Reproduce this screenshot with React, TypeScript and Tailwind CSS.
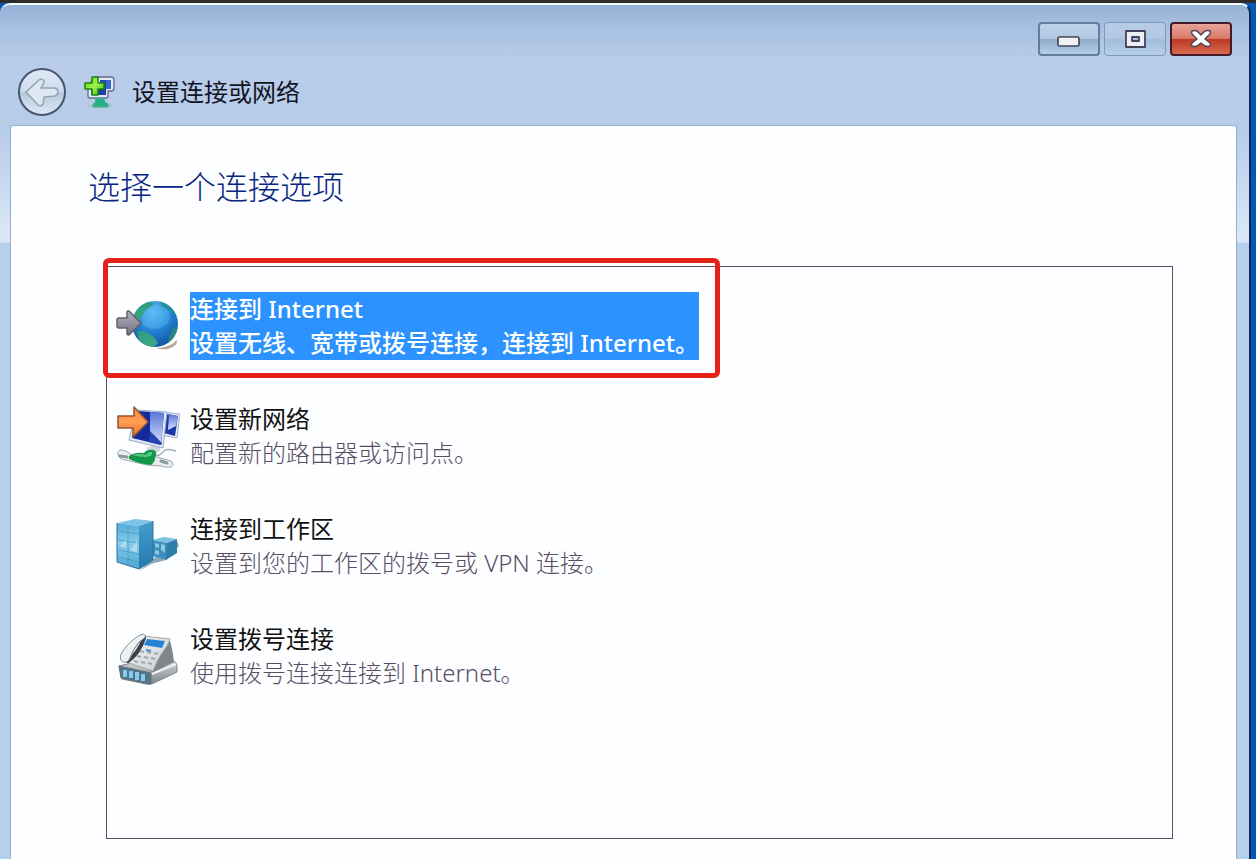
import React, { useState } from "react";

function NetworkAddIcon() {
  return (
    <svg width="34" height="34" viewBox="0 0 34 34" aria-hidden="true">
      <defs>
        <linearGradient id="plus" x1="0" y1="0" x2="1" y2="1">
          <stop offset="0" stopColor="#3fdc16" />
          <stop offset=".5" stopColor="#a5f24a" />
          <stop offset="1" stopColor="#27b80e" />
        </linearGradient>
      </defs>
      <ellipse cx="16" cy="31" rx="13" ry="2" fill="#aebfd2" />
      <path d="M12 2h15q3 0 3 3v8q0 3-3 3h-3v5q0 2-2 2H6q-2 0-2-2V10z" fill="#e3e8f7" stroke="#646c90" strokeWidth="1.3" />
      <path d="M16 5h11v9H16z" fill="#2348b0" />
      <path d="M7 12h15v8H7z" fill="#213e9d" />
      <path d="M22 5h5v9h-5z" fill="#3a68cc" />
      <path d="M11 24q4-2 9 0l1 3 3 2v3H9v-3l3-2z" fill="#27b183" stroke="#4cae94" />
      <path d="M8 2h6v6h6v6h-6v6H8v-6H1V8h7z" fill="url(#plus)" stroke="#188414" strokeWidth="1.5" strokeLinejoin="round" />
    </svg>
  );
}

function GlobeIcon() {
  return (
    <svg width="64" height="64" viewBox="0 0 64 64" aria-hidden="true">
      <defs>
        <radialGradient id="sea" cx=".45" cy=".25" r=".8">
          <stop offset="0" stopColor="#69c8f5" />
          <stop offset=".5" stopColor="#2382d4" />
          <stop offset="1" stopColor="#164f9d" />
        </radialGradient>
        <linearGradient id="greyArrow" x1="0" y1="0" x2="0" y2="1">
          <stop offset="0" stopColor="#b5b0be" />
          <stop offset="1" stopColor="#77727f" />
        </linearGradient>
        <linearGradient id="land" x1="0" y1="0" x2="0" y2="1">
          <stop offset="0" stopColor="#2c9c86" />
          <stop offset="1" stopColor="#41aa7c" />
        </linearGradient>
        <clipPath id="globeClip"><circle cx="39" cy="30" r="23" /></clipPath>
      </defs>
      <path d="M40 54q13 0 21-8 1 6-9 9-7 1-12-1z" fill="#b9a79b" />
      <circle cx="39" cy="30" r="23" fill="url(#sea)" />
      <g clipPath="url(#globeClip)">
        <path d="M15 30Q17 12 33 7l5 3-8 6-5 7-4 9z" fill="url(#land)" />
        <path d="M43 6l12 4 7 13-6-4-5-4-5-3z" fill="#218f8c" opacity=".8" />
        <path d="M21 37l8 0 9 6 4 6-6 6-12-4z" fill="url(#land)" />
        <path d="M57 34l7-2-3 12-10 9 2-10z" fill="#2a9077" opacity=".8" />
        <path d="M29 16q13-10 24 2 3 8-3 13-12 8-22 1-4-7 1-16z" fill="#53b2f5" opacity=".45" />
      </g>
      <path d="M1 26q0-2 2-2h8v-6q1-2 3 0l11 11-11 11q-2 2-3 0v-6H3q-2 0-2-2z" fill="url(#greyArrow)" stroke="#625d69" strokeWidth="1.5" strokeLinejoin="round" />
    </svg>
  );
}

function NewNetworkIcon() {
  return (
    <svg width="64" height="64" viewBox="0 0 64 64" aria-hidden="true">
      <defs>
        <linearGradient id="glare" x1="0" y1="0" x2="0" y2="1">
          <stop offset="0" stopColor="#5877d8" />
          <stop offset="1" stopColor="#d7e2fb" />
        </linearGradient>
        <linearGradient id="orange" x1="0" y1="0" x2="0" y2="1">
          <stop offset="0" stopColor="#f58a3e" />
          <stop offset=".5" stopColor="#ff9e55" />
          <stop offset="1" stopColor="#e36a22" />
        </linearGradient>
      </defs>
      <path d="M30 44l10-4 5 6-8 5z" fill="#cfd6de" />
      <path d="M47 8l17 2-3 24-16-3z" fill="#e3e9f6" stroke="#a5b2cf" />
      <path d="M50 10l12 2-3 20-11-3z" fill="#1c35a8" />
      <path d="M53 10l9 2-2 10-8 4z" fill="url(#glare)" />
      <path d="M20 6l31 2-4 36-34-8z" fill="#e3e9f6" stroke="#9ba8c7" />
      <path d="M22 7l26 2-3 32-29-7z" fill="#142a9c" />
      <path d="M34 8l14 1-3 31-11-12z" fill="url(#glare)" />
      <path d="M34 27l12 12-1 2-12-3z" fill="#2444b4" />
      <path d="M60 47q-10-4-14 2-4 4-8 2" fill="none" stroke="#a6adb6" strokeWidth="1.5" />
      <path d="M4 46q4-1 12 5l21 1 18 5q4 4 0 6-4 1-10-1L31 61 5 55q-6-6-1-9z" fill="#e9edef" stroke="#9aa9aa" />
      <path d="M4 52l7 1M45 57l6 2" stroke="#8b9a9e" strokeWidth="3" strokeLinecap="round" />
      <path d="M13 52q6-4 15-3 3-4 10-3 4 3 1 7 1 4-4 8-12-1-22-6z" fill="#12964a" />
      <path d="M16 51q8-2 14 0 3-4 6-3 1 4-5 5-8 0-15-2z" fill="#57c583" />
      <path d="M2 12h16V3l14 15-15 15v-9H2z" fill="url(#orange)" stroke="#96562f" strokeWidth="1.5" strokeLinejoin="round" />
    </svg>
  );
}

function WorkplaceIcon() {
  return (
    <svg width="64" height="64" viewBox="0 0 64 64" aria-hidden="true">
      <defs>
        <linearGradient id="tower" x1="0" y1="0" x2="0" y2="1">
          <stop offset="0" stopColor="#55aedb" />
          <stop offset=".45" stopColor="#86cbea" />
          <stop offset="1" stopColor="#4ba4d2" />
        </linearGradient>
        <linearGradient id="towerSide" x1="0" y1="0" x2="0" y2="1">
          <stop offset="0" stopColor="#459fcd" />
          <stop offset="1" stopColor="#2478ae" />
        </linearGradient>
      </defs>
      <path d="M36 46l25-19 2 5-13 14-15 4-12 7z" fill="#8ea7b9" />
      <path d="M36 26l12-3 13 2-10 4z" fill="#7cc2e0" />
      <path d="M36 26l15 3v17l-15-4z" fill="#3b8fba" />
      <path d="M51 29l10-4v14l-11 7z" fill="#2f7eaa" />
      <path d="M39 29l4 1v4l-4-1zM45 30l4 1v8l-4-3zM39 36l4 1v4l-4-1z" fill="#8cc6df" />
      <path d="M1 9L19 5l18 2-14 5z" fill="#7dc3e3" />
      <path d="M1 9l22 3v43L1 48z" fill="url(#tower)" />
      <path d="M23 12l14-5v39l-14 9z" fill="url(#towerSide)" />
      <path d="M12 11v40M2 17l21 3M2 26l21 3M2 36l21 4M2 43l21 5" stroke="#3b93c2" strokeWidth="1" opacity=".6" fill="none" />
      <path d="M4 32l6-6v8zM14 36l7-9v12z" fill="#bddeea" opacity=".8" />
      <path d="M1 9v39l22 7 14-9V7" stroke="#2c719c" fill="none" />
    </svg>
  );
}

function PhoneIcon() {
  return (
    <svg width="64" height="64" viewBox="0 0 64 64" aria-hidden="true">
      <defs>
        <linearGradient id="phoneBody" x1="0" y1="0" x2="1" y2="1">
          <stop offset="0" stopColor="#f6f7f8" />
          <stop offset="1" stopColor="#c8cdd0" />
        </linearGradient>
        <linearGradient id="phoneBase" x1="0" y1="0" x2="0" y2="1">
          <stop offset="0" stopColor="#d9dddf" />
          <stop offset="1" stopColor="#7c8488" />
        </linearGradient>
      </defs>
      <path d="M3 42l29-7 24 1q5 2 5 6v6L38 59q-4 2-8 1L6 55z" fill="url(#phoneBase)" stroke="#7b8387" />
      <path d="M54 16q3 12 4 22L36 49l-2-3z" fill="#7f8688" />
      <path d="M27 12l27 3q-2 7-8 14-5 7-9 18L10 38z" fill="url(#phoneBody)" stroke="#a0a6aa" />
      <path d="M31 15l18 2-3 7-18-3z" fill="#2684d7" />
      <path d="M24 27l4 1M31 28l4 1M38 29l4 1M21 32l4 1M28 33l4 1M35 34l4 1M18 37l4 1M25 38l4 1M32 39l4 1" stroke="#a0a8ac" strokeWidth="2" />
      <path d="M30 26l5 1" stroke="#3b91d6" strokeWidth="2" />
      <path d="M28 14Q23 29 12 37" stroke="#37414b" strokeWidth="4" strokeLinecap="round" fill="none" />
      <path d="M24 11q4-2 6 1-2 3-7 6-6 7-9 16-2 5-7 4-4-2-2-8Q12 18 24 11z" fill="#eef1f3" stroke="#858e94" />
      <path d="M3 42l32 7v11L5 54z" fill="#52748b" stroke="#65727a" />
      <path d="M9 46v7M15 47v7M21 48v8M27 50v7" stroke="#85cbed" strokeWidth="4" />
      <path d="M36 50l24-10" stroke="#f0f2f3" strokeWidth="2" />
    </svg>
  );
}

function BackArrow() {
  return (
    <svg width="36" height="32" viewBox="0 0 36 32" aria-hidden="true">
      <path d="M2 16L15 4q3-2 5 1 0 3-3 7h14q3 1 3 4t-3 4l-11 1-1 7q-2 3-5 1z" fill="#dde8f3" stroke="#94a3b2" strokeWidth="1.5" strokeLinejoin="round" />
    </svg>
  );
}

const options = [
  { title: "连接到 Internet", detail: "设置无线、宽带或拨号连接，连接到 Internet。", Icon: GlobeIcon },
  { title: "设置新网络", detail: "配置新的路由器或访问点。", Icon: NewNetworkIcon },
  { title: "连接到工作区", detail: "设置到您的工作区的拨号或 VPN 连接。", Icon: WorkplaceIcon },
  { title: "设置拨号连接", detail: "使用拨号连接连接到 Internet。", Icon: PhoneIcon },
];

const captionButton = "flex h-[34px] w-[62px] items-center justify-center rounded-[4px]";

export default function App() {
  const [selected, setSelected] = useState(0);
  return (
    <div className="flex min-h-screen flex-col border-t-[3px] border-[#2d2c28] bg-[#0756b5] pr-[5px] font-['Noto_Sans','Noto_Sans_CJK_SC',sans-serif]">
      <div className="flex flex-1 flex-col rounded-t-[10px] border-t-2 border-r-2 border-t-[#f4f9ff] border-r-[#0a2b55] bg-[linear-gradient(to_bottom,#96b2d5_0px,#a9c2e2_25px,#b9cdeb_60px,#b7cce9_125px,#dce8f7_237px,#b6cfea_238px,#b6cfea_100%)]">
        <header className="pr-[17px] pb-[10px] pl-4 pt-[17px]">
          <div className="flex justify-end gap-1">
            <button aria-label="最小化" className={`${captionButton} border-2 border-[#667b99] bg-[linear-gradient(#bed1e9_0%,#b3c9e4_48%,#8eacca_52%,#b5cfea_100%)] pt-1`}>
              <svg width="24" height="12" viewBox="0 0 24 12" aria-hidden="true"><rect x="1" y="2" width="21" height="9" rx="1.5" fill="#f1f1f3" stroke="#464857" strokeWidth="1.7" /></svg>
            </button>
            <button aria-label="最大化" className={`${captionButton} border border-[#8298b8] bg-[linear-gradient(#b7cce7_0%,#b1c8e3_48%,#a2bddb_52%,#b7cfeb_100%)]`}>
              <svg width="24" height="20" viewBox="0 0 24 20" aria-hidden="true"><path d="M3 2h19v16H3zM9 8v4h7V8z" fill="#edf1f7" fillRule="evenodd" stroke="#44415a" strokeWidth="1.8" strokeLinejoin="round" /></svg>
            </button>
            <button aria-label="关闭" className={`${captionButton} border-2 border-[#471b2a] bg-[linear-gradient(#e8a397_0%,#d87969_48%,#bd3822_52%,#d76b51_100%)]`}>
              <svg width="24" height="20" viewBox="0 0 24 20" aria-hidden="true"><path d="M3 2q3-1 5 0l4 4 4-4q3-1 5 0 1 1 0 3l-5 5 5 4q1 2 0 3-3 1-5 0l-4-3-4 3q-3 1-5 0-1-1 0-3l5-4-5-5q-1-2 0-3z" fill="#fff" stroke="#55475b" strokeWidth="1.5" strokeLinejoin="round" /></svg>
            </button>
          </div>
          <div className="mt-3 flex items-center pl-[2px]">
            <button aria-label="返回" className="flex size-12 items-center justify-center rounded-full border-2 border-[#46566b] bg-[linear-gradient(#dfe9f5_0%,#cddced_48%,#b7c9db_52%,#dbe8f5_100%)]">
              <BackArrow />
            </button>
            <div className="ml-[18px] flex items-center gap-[14px]">
              <NetworkAddIcon />
              <span className="text-[24px] leading-8 text-[#14141f]">设置连接或网络</span>
            </div>
          </div>
        </header>

        <main className="mr-[13px] ml-[11px] flex flex-1 flex-col rounded-t-[2px] bg-[#fdfeff] pt-[39px] pr-[63px] pb-5 pl-[95px] shadow-[0_0_0_1px_#94add0]">
          <h1 className="-ml-[18px] text-[32px] leading-[44px] font-light text-[#082582]">选择一个连接选项</h1>
          <div className="mt-[57px] flex flex-1 flex-col gap-[42px] border border-[#55535e] pt-[25px] pl-[9px]">
            {options.map(({ title, detail, Icon }, index) => (
              <div key={title} className="relative flex">
                <button
                  onClick={() => setSelected(index)}
                  aria-pressed={selected === index}
                  className="flex items-center gap-[10px] text-left text-[24px] leading-[34px]"
                >
                  <Icon />
                  <span className={selected === index ? "flex flex-col bg-[#2b92ff] font-medium text-white" : "flex flex-col text-[#111]"}>
                    <span>{title}</span>
                    <span className={selected === index ? "" : "font-light text-[#574f66]"}>{detail}</span>
                  </span>
                </button>
                {index === 0 && (
                  <span className="pointer-events-none absolute -top-[34px] -left-[13px] h-[120px] w-[617px] rounded-[6px] border-[5px] border-[#e62117]" />
                )}
              </div>
            ))}
          </div>
        </main>
      </div>
    </div>
  );
}
